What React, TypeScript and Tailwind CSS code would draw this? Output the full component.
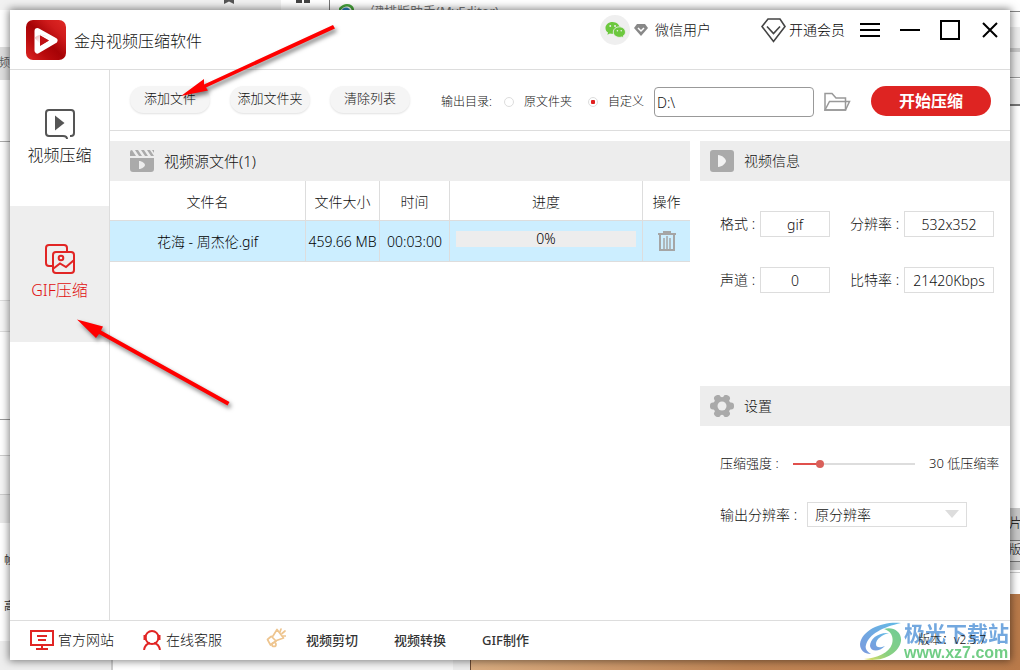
import { useState } from "react";
import type { ReactNode } from "react";

const SIDE_ICON = "h-[30px] w-[30px]";

function Logo() {
  return (
    <svg viewBox="0 0 40 40" className="h-10 w-10" aria-hidden="true">
      <defs>
        <linearGradient id="logoBg" x1="1" y1="0" x2="0" y2="1">
          <stop offset="0" stopColor="#e02a26" />
          <stop offset="0.25" stopColor="#cf1b1b" />
          <stop offset="0.5" stopColor="#a60306" />
          <stop offset="0.7" stopColor="#b80a0c" />
          <stop offset="1" stopColor="#de2624" />
        </linearGradient>
        <linearGradient id="logoFade" x1="0" y1="0" x2="1" y2="0.7">
          <stop offset="0" stopColor="#d99" stopOpacity="0.9" />
          <stop offset="1" stopColor="#fff" stopOpacity="0" />
        </linearGradient>
      </defs>
      <rect width="40" height="40" rx="7" fill="url(#logoBg)" />
      <path d="M11.500 11 28.500 20.500 11.500 30.500z" fill="none" stroke="#fff" strokeWidth="6" strokeLinejoin="round" />
      <path d="M8.500 18c4-4 10-4.500 14.500 0l-9-3.500v9z" fill="url(#logoFade)" />
      <path d="M14 15.200 23 20.500 14 26z" fill="#c01014" />
    </svg>
  );
}

function WechatIcon() {
  return (
    <svg viewBox="0 0 22 18" className="h-[18px] w-[21px]" aria-hidden="true">
      <path
        d="M8 .5C3.600.5.500 3.300.500 6.800c0 2 1 3.700 2.700 4.900L2.500 14l2.700-1.400c1 .3 2 .4 3 .4C12 13 15.500 10.200 15.500 6.800S12 .5 8 .5z"
        fill="#6cc83e"
      />
      <path
        d="M15 5.700c-3.600 0-6.300 2.400-6.300 5.500s2.700 5.500 6.300 5.500c.8 0 1.600-.1 2.300-.4l2.200 1.200-.6-2c1.600-1 2.500-2.500 2.500-4.300 0-3.100-2.800-5.500-6.400-5.500z"
        fill="#6cc83e"
        stroke="#efefef"
        strokeWidth="0.900"
      />
      <circle cx="5.500" cy="4.800" r="1" fill="#efefef" />
      <circle cx="10.500" cy="4.800" r="1" fill="#efefef" />
      <circle cx="13" cy="9.700" r="0.800" fill="#efefef" />
      <circle cx="17" cy="9.700" r="0.800" fill="#efefef" />
    </svg>
  );
}

function SidebarItem({ label, active, children }: { label: string; active?: boolean; children: ReactNode }) {
  return (
    <button
      type="button"
      className={
        active
          ? "flex h-[136px] flex-col items-center justify-center gap-1 bg-[#eeeeee] pb-0.5 text-[#e01010]"
          : "flex h-[136px] flex-col items-center justify-center gap-1 text-[#111111]"
      }
    >
      {children}
      <span className="text-base leading-6">{label}</span>
    </button>
  );
}

function PillButton({ children }: { children: ReactNode }) {
  return (
    <button
      type="button"
      className="h-[27px] w-20 rounded-full bg-[#f5f5f5] text-[13px] text-[#111111] shadow-[0_1px_2px_rgba(0,0,0,0.12)]"
    >
      {children}
    </button>
  );
}

function PathRadio({ label, checked, onChange }: { label: string; checked: boolean; onChange: () => void }) {
  return (
    <label className="flex items-center gap-2.5 text-xs">
      <input
        type="radio"
        name="output"
        checked={checked}
        onChange={onChange}
        className="h-2.5 w-2.5 appearance-none rounded-full border border-[#dddddd] bg-white checked:bg-[radial-gradient(circle,#e12020_2px,#fff_2.500px)]"
      />
      {label}
    </label>
  );
}

function SectionTitle({ icon, children }: { icon: ReactNode; children: ReactNode }) {
  return (
    <div className="flex h-10 items-center gap-2.5 bg-[#ededed] px-2.5">
      {icon}
      <h2 className="text-sm">{children}</h2>
    </div>
  );
}

function InfoField({ id, label, value, wide }: { id: string; label: string; value: string; wide?: boolean }) {
  return (
    <div className="flex items-center justify-between">
      <label htmlFor={id} className="whitespace-nowrap text-sm">
        {label} :
      </label>
      <input
        id={id}
        readOnly
        value={value}
        className={
          wide
            ? "h-[26px] w-[90px] border border-[#dddddd] text-center text-sm outline-none"
            : "h-[26px] w-[70px] border border-[#dddddd] text-center text-sm outline-none"
        }
      />
    </div>
  );
}

function Desktop() {
  return (
    <div className="absolute inset-0 overflow-hidden bg-white text-[#333333]" aria-hidden="true">
      <div className="absolute left-0 top-0 h-2.5 w-[281px] bg-[#f1f1f1]" />
      <svg className="absolute left-[224px] top-0 h-1 w-[10px]" viewBox="0 0 10 4">
        <path d="M0 0h10v4L5 1.500 0 4z" fill="#555" />
      </svg>
      <svg className="absolute left-[296px] top-0 h-[3px] w-[15px]" viewBox="0 0 15 3">
        <path d="M0 0h6v3H0zM8 0h6v3H8z" fill="#444" />
      </svg>
      <div className="absolute left-[329px] top-0 h-3 w-px bg-[#777777]" />
      <svg className="absolute left-[339px] top-[3px] h-[15px] w-[15px]" viewBox="0 0 15 15">
        <circle cx="7" cy="9" r="4.500" fill="#2c82bd" />
        <path d="M0 7Q5 1 10 2.500 14 4 14 8" fill="none" stroke="#46a33a" strokeWidth="2.500" />
      </svg>
      <span className="absolute left-[358px] top-[3px] whitespace-nowrap text-[13px] font-normal leading-4 text-[#777777]">
        一键排版助手(MyEditor)
      </span>

      <div className="absolute left-0 top-[47px] h-[33px] w-2.5 bg-[#dedede]" />
      <span className="absolute left-[-2px] top-[55px] whitespace-nowrap text-xs leading-4">频夕</span>
      <div className="absolute left-0 top-[141px] h-px w-2.5 bg-[#aaaaaa]" />
      <div className="absolute left-0 top-[300px] h-8 w-2.5 border-t border-b border-[#dddddd] bg-[#f7f7f7]" />
      <div className="absolute left-0 top-[419px] h-px w-2.5 bg-[#999999]" />
      <div className="absolute left-0 top-[455px] h-10 w-2.5 border-t border-b border-[#cccccc] bg-[#f5f5f5]" />
      <div className="absolute left-0 top-[495px] h-7 w-2.5 bg-[#e9e9e9]" />
      <span className="absolute left-1 top-[552px] text-[11px] font-normal leading-4">帧</span>
      <span className="absolute left-1 top-[598px] text-[11px] font-normal leading-4">高</span>
      <div className="absolute left-0 top-[641px] h-[30px] w-[113px] border-r-2 border-[#cccccc] bg-[#eeeeee]" />
      <div className="absolute bottom-0 left-[160px] h-2.5 w-[293px] bg-[#f5f5f5]" />
      <div className="absolute bottom-0 left-[453px] h-2.5 w-[17px] bg-[#ebebeb]" />
      <div className="absolute bottom-0 left-[470px] right-0 h-[76px] border-l border-[#6b4a33] bg-linear-to-r from-[#d9ac80] via-[#c08555] to-[#b97a4a]" />

      <div className="absolute right-0 top-[11px] h-px w-2.5 bg-[#888888]" />
      <div className="absolute right-0 top-[27px] h-[51px] w-2.5 border-b border-[#999999] bg-[#ededed]" />
      <div className="absolute right-0 top-[48px] h-1 w-2.5 bg-[#c8c8c8]" />
      <div className="absolute right-0 top-[79px] h-[27px] w-2.5 border-b-2 border-[#777777] bg-[#eeeeee]" />
      <div className="absolute right-0 top-[508px] h-[62px] w-2.5 bg-[#c9c9c9]" />
      <span className="absolute left-[1009px] top-[514px] text-[13px] leading-4 text-black">片</span>
      <div className="absolute right-0 top-[540px] h-[22px] w-2.5 border-y border-[#777777] bg-[#dddddd]" />
      <span className="absolute left-[1009px] top-[542px] text-xs leading-4 text-black">版</span>
      <div className="absolute right-0 top-[572px] h-px w-2.5 bg-[#cccccc]" />
    </div>
  );
}

function Arrows() {
  return (
    <svg
      className="pointer-events-none absolute left-0 top-0 h-[430px] w-[360px] drop-shadow-[2px_3px_2px_rgba(0,0,0,0.5)]"
      viewBox="0 0 360 430"
      aria-hidden="true"
    >
      <g fill="#ff0000">
        <path d="M181 96 204 79 204 84.500 333 25 335 28.500 206 87.500 208 90.500z" />
        <path d="M77 319.500 103 326.500 101 330.500 229.500 402 227.500 405.500 99 334 96 338z" />
      </g>
    </svg>
  );
}

function Watermark() {
  return (
    <div className="pointer-events-none absolute bottom-2 right-[11px] flex items-end gap-0.5 opacity-90" aria-hidden="true">
      <svg viewBox="0 0 42 40" className="h-10 w-[42px]">
        <defs>
          <linearGradient id="wmBlue" x1="1" y1="0" x2="0" y2="1">
            <stop offset="0" stopColor="#53b4e4" />
            <stop offset="1" stopColor="#6d8fda" />
          </linearGradient>
          <linearGradient id="wmGreen" x1="1" y1="0" x2="0" y2="1">
            <stop offset="0" stopColor="#62c68e" />
            <stop offset="0.600" stopColor="#7dcc74" />
            <stop offset="1" stopColor="#e6dc55" />
          </linearGradient>
        </defs>
        <path d="M41 1C24-1 2 7 0 22c0 6 4 10 11 10-5-3-6-6-5-9C9 12 23 5 41 1z" fill="url(#wmBlue)" />
        <path d="M29 11C18 10 10 17 10 24c1 6 9 6 15 0-5 2-9 2-9-2 0-5 6-9 13-11z" fill="url(#wmBlue)" />
        <path d="M24 7c9-3 18 3 17 12-2 13-20 22-37 18 13-1 25-6 28-15 2-7-1-13-8-15z" fill="url(#wmGreen)" />
      </svg>
      <div className="flex flex-col whitespace-nowrap font-bold">
        <span className="text-[21px] leading-[22px] text-[#649fdc]">极光下载站</span>
        <span className="font-['Liberation_Sans',sans-serif] text-base leading-[18px] text-[#62c878]">www.xz7.com</span>
      </div>
    </div>
  );
}

export default function App() {
  const [target, setTarget] = useState("custom");
  const [strength, setStrength] = useState(30);
  const [path, setPath] = useState("D:\\");
  const filled = ((strength - 20) / 50) * 100;

  return (
    <div className="relative flex min-h-screen p-2.5 font-['Noto_Sans','Noto_Sans_CJK_SC',sans-serif] font-light text-[#111111]">
      <Desktop />
      <main className="relative flex min-w-0 flex-1 flex-col bg-white shadow-[0_0_8px_1px_rgba(0,0,0,0.5)]">
        <header className="flex h-[60px] items-start border-b border-[#dddddd] pl-4 pr-2.5">
          <div className="flex flex-1 items-center gap-2 pt-2.5">
            <Logo />
            <h1 className="pt-0.5 text-base">金舟视频压缩软件</h1>
          </div>
          <div className="flex h-10 items-center">
            <button type="button" className="mr-[50px] flex items-center text-sm">
              <span className="mr-1 flex h-[30px] w-[30px] items-center justify-center rounded-full bg-[#efefef]">
                <WechatIcon />
              </span>
              <svg viewBox="0 0 14 12" className="mr-[7px] h-3 w-3.5" aria-hidden="true">
                <path d="M3 0h8l3 4-7 8-7-8z" fill="#888" />
                <path d="M4 4l3 3 3-3" fill="none" stroke="#fff" strokeWidth="1.500" />
              </svg>
              微信用户
            </button>
            <button type="button" className="mr-[15px] flex items-center gap-[3px] text-sm text-black">
              <svg viewBox="0 0 25 25" className="h-[25px] w-[25px]" fill="none" stroke="#444" strokeWidth="1.600" aria-hidden="true">
                <path d="M7 1h12l5 7.500L12.500 23.500 1 8.500z" />
                <path d="M6 8.500l6.500 7 6.500-7" />
              </svg>
              开通会员
            </button>
            <div className="flex gap-5">
              <button type="button" aria-label="菜单">
                <svg viewBox="0 0 20 20" className="h-5 w-5">
                  <path d="M0 4h20M0 10h20M0 16h20" stroke="#000" strokeWidth="2" />
                </svg>
              </button>
              <button type="button" aria-label="最小化">
                <svg viewBox="0 0 20 20" className="h-5 w-5">
                  <path d="M0 10h20" stroke="#000" strokeWidth="2" />
                </svg>
              </button>
              <button type="button" aria-label="最大化">
                <svg viewBox="0 0 20 20" className="h-5 w-5">
                  <path d="M1 1h18v18H1z" fill="none" stroke="#000" strokeWidth="2" />
                </svg>
              </button>
              <button type="button" aria-label="关闭">
                <svg viewBox="0 0 20 20" className="h-5 w-5">
                  <path d="M3 3l14 14M17 3 3 17" stroke="#000" strokeWidth="2" />
                </svg>
              </button>
            </div>
          </div>
        </header>

        <div className="flex flex-1">
          <nav className="flex w-[100px] shrink-0 flex-col border-r border-[#dddddd]">
            <SidebarItem label="视频压缩">
              <svg viewBox="0 0 30 30" className={SIDE_ICON} fill="none" stroke="#555" strokeWidth="2" aria-hidden="true">
                <path d="M25 27h1a3 3 0 0 0 3-3V4a3 3 0 0 0-3-3H4a3 3 0 0 0-3 3v20a3 3 0 0 0 3 3h14q4 0 4 3" />
                <path d="M10 6.500v15L19.500 14z" fill="#555" stroke="none" />
              </svg>
            </SidebarItem>
            <SidebarItem label="GIF压缩" active>
              <svg viewBox="0 0 30 30" className={SIDE_ICON} fill="none" stroke="#e12524" strokeWidth="2" aria-hidden="true">
                <path d="M7 22H4a3 3 0 0 1-3-3V4a3 3 0 0 1 3-3h15a3 3 0 0 1 3 3v3" />
                <rect x="8" y="8" width="21" height="21" rx="3" />
                <circle cx="16" cy="14" r="2.300" />
                <path d="M8.500 24.500l6.500-5 6 3.500 7.500-6.500" />
              </svg>
            </SidebarItem>
          </nav>

          <div className="flex min-w-0 flex-1 flex-col">
            <div className="flex h-[61px] items-center border-b border-[#dddddd] pl-5 pr-[19px]">
              <div className="mr-[31px] flex gap-5 pb-0.5">
                <PillButton>添加文件</PillButton>
                <PillButton>添加文件夹</PillButton>
                <PillButton>清除列表</PillButton>
              </div>
              <div className="flex items-center pt-1">
                <span className="mr-3 text-xs">输出目录:</span>
                <div className="mr-2.5 flex gap-4">
                  <PathRadio label="原文件夹" checked={target === "source"} onChange={() => setTarget("source")} />
                  <PathRadio label="自定义" checked={target === "custom"} onChange={() => setTarget("custom")} />
                </div>
              </div>
              <div className="flex items-center gap-2.5 pt-1">
                <input
                  aria-label="输出路径"
                  value={path}
                  onChange={(e) => setPath(e.target.value)}
                  className="h-[30px] w-40 rounded border border-[#999999] px-0.5 text-sm outline-none"
                />
                <button type="button" aria-label="打开文件夹">
                  <svg viewBox="0 0 27 20" className="h-5 w-[27px]" fill="none" stroke="#999" strokeWidth="1.500">
                    <path d="M1 18V1.500h7l4 4.500h9.500v12z" />
                    <path d="M1 18 5.500 9.500H25.500L21.500 18z" />
                  </svg>
                </button>
              </div>
              <button
                type="button"
                className="ml-auto mt-0.5 h-[30px] w-[120px] rounded-full bg-[#de2422] text-base font-bold text-white"
              >
                开始压缩
              </button>
            </div>

            <div className="flex flex-1 gap-2.5 pt-2.5">
              <section className="min-w-0 flex-1">
                <div className="flex h-10 items-center gap-2.5 bg-[#ededed] px-5">
                  <svg viewBox="0 0 24 22" className="h-[22px] w-6" fill="#aaa" aria-hidden="true">
                    <path d="M0 8h24v11a3 3 0 0 1-3 3H3a3 3 0 0 1-3-3zM0 6V2q0-2 2-2l4 6zM5 0h3l4 6H9zM11 0h3l4 6h-3zM17 0h3l4 6h-3zM22 0h2v3z" />
                    <path d="M9 11v8c3 0 6-2.500 6-4s-3-4-6-4z" fill="#ededed" />
                  </svg>
                  <h2 className="text-[15px]">视频源文件(1)</h2>
                </div>
                <table className="w-full table-fixed border-separate border-spacing-0 text-center text-sm">
                  <colgroup>
                    <col />
                    <col className="w-[74px]" />
                    <col className="w-[70px]" />
                    <col className="w-[193px]" />
                    <col className="w-[47px]" />
                  </colgroup>
                  <thead>
                    <tr className="h-10">
                      <th className="border-b border-r border-[#dddddd] p-0 pt-0.5 font-light">文件名</th>
                      <th className="border-b border-r border-[#dddddd] p-0 pt-0.5 font-light">文件大小</th>
                      <th className="border-b border-r border-[#dddddd] p-0 pt-0.5 font-light">时间</th>
                      <th className="border-b border-r border-[#dddddd] p-0 pt-0.5 font-light">进度</th>
                      <th className="border-b border-[#dddddd] p-0 pt-0.5 font-light">操作</th>
                    </tr>
                  </thead>
                  <tbody>
                    <tr className="h-[41px] bg-[#cceeff] text-black">
                      <td className="border-b border-r border-[#dddddd] p-0 pt-0.5">花海 - 周杰伦.gif</td>
                      <td className="whitespace-nowrap border-b border-r border-[#dddddd] p-0 pt-0.5">459.66 MB</td>
                      <td className="border-b border-r border-[#dddddd] p-0 pt-0.5">00:03:00</td>
                      <td className="border-b border-r border-[#dddddd] px-1.5 pb-1 pt-0">
                        <div role="progressbar" aria-valuenow={0} className="h-4 bg-[#ededed] text-sm leading-4">
                          0%
                        </div>
                      </td>
                      <td className="border-b border-[#dddddd] p-0">
                        <button type="button" aria-label="删除" className="block w-full">
                          <svg viewBox="0 0 18 20" className="mx-auto h-5 w-[18px]" fill="none" stroke="#a5a5a5" strokeWidth="2">
                            <path d="M0 3h18M5 1h8M2 4v15h14V4" />
                            <path d="M6 7v11M9 5v13M12 7v11" strokeWidth="1.500" />
                          </svg>
                        </button>
                      </td>
                    </tr>
                  </tbody>
                </table>
              </section>

              <aside className="w-[310px] shrink-0">
                <section className="h-[245px]">
                  <SectionTitle
                    icon={
                      <svg viewBox="0 0 24 22" className="h-[22px] w-6" aria-hidden="true">
                        <rect width="24" height="22" rx="3" fill="#aaa" />
                        <path d="M8 5v12c4 0 8-4 8-6s-4-6-8-6z" fill="#f2f2f2" />
                      </svg>
                    }
                  >
                    视频信息
                  </SectionTitle>
                  <div className="grid grid-cols-[110px_144px] gap-x-5 gap-y-[30px] pl-5 pt-[30px]">
                    <InfoField id="format" label="格式" value="gif" />
                    <InfoField id="size" label="分辨率" value="532x352" wide />
                    <InfoField id="channel" label="声道" value="0" />
                    <InfoField id="bitrate" label="比特率" value="21420Kbps" wide />
                  </div>
                </section>
                <section>
                  <SectionTitle
                    icon={
                      <svg viewBox="0 0 24 22" className="h-[22px] w-6" aria-hidden="true">
                        <g fill="#aaa">
                          <circle cx="12" cy="11" r="9" />
                          <rect x="0" y="7.500" width="24" height="7" rx="3" />
                          <rect x="0" y="7.500" width="24" height="7" rx="3" transform="rotate(60 12 11)" />
                          <rect x="0" y="7.500" width="24" height="7" rx="3" transform="rotate(120 12 11)" />
                        </g>
                        <circle cx="12" cy="11" r="4.500" fill="#ededed" />
                      </svg>
                    }
                  >
                    设置
                  </SectionTitle>
                  <div className="mt-7 flex h-5 items-center pl-5 text-[13px]">
                    <label htmlFor="strength" className="w-[73px]">
                      压缩强度 :
                    </label>
                    <input
                      id="strength"
                      type="range"
                      min={20}
                      max={70}
                      value={strength}
                      onChange={(e) => setStrength(Number(e.target.value))}
                      className="h-2 w-[122px] appearance-none bg-size-[100%_2px] bg-center bg-no-repeat [&::-webkit-slider-thumb]:h-2 [&::-webkit-slider-thumb]:w-2 [&::-webkit-slider-thumb]:appearance-none [&::-webkit-slider-thumb]:rounded-full [&::-webkit-slider-thumb]:bg-[#d9605a]"
                      style={{ backgroundImage: `linear-gradient(to right, #e0504c ${filled}%, #dddddd ${filled}%)` }}
                    />
                    <span className="ml-3.5 whitespace-nowrap">{strength} 低压缩率</span>
                  </div>
                  <div className="mt-7 flex items-center pl-5 text-sm">
                    <label htmlFor="resolution" className="w-[87px]">
                      输出分辨率 :
                    </label>
                    <div className="relative">
                      <select
                        id="resolution"
                        className="h-[25px] w-40 appearance-none border border-[#dddddd] bg-white px-[7px] text-sm leading-5 outline-none"
                      >
                        <option>原分辨率</option>
                      </select>
                      <svg viewBox="0 0 14 8" className="pointer-events-none absolute right-2 top-2 h-2 w-3.5" aria-hidden="true">
                        <path d="M0 0h14L7 8z" fill="#ddd" />
                      </svg>
                    </div>
                  </div>
                </section>
              </aside>
            </div>
          </div>
        </div>

        <footer className="flex h-10 items-center border-t border-[#dddddd] pb-px pl-5 pr-6 text-sm">
          <a href="#site" className="mr-[29px] flex items-center gap-1">
            <svg viewBox="0 0 24 20" className="h-5 w-6" fill="none" stroke="#e12524" strokeWidth="2" aria-hidden="true">
              <path d="M1 1h22v14H1zM6 19h12M12 15v4M7 6h10M8 10h8" />
            </svg>
            官方网站
          </a>
          <a href="#service" className="mr-11 flex items-center gap-[5px]">
            <svg viewBox="0 0 18 20" className="h-5 w-[18px]" fill="none" stroke="#e12524" strokeWidth="2" aria-hidden="true">
              <circle cx="9" cy="7.500" r="6.500" />
              <path d="M2 5v5M16 5v5" strokeWidth="3" />
              <path d="M1 20q1-6 6-7M17 20q-1-6-6-7" />
            </svg>
            在线客服
          </a>
          <svg
            viewBox="0 0 20 20"
            className="mb-1 mr-5 h-5 w-5"
            fill="none"
            stroke="#eec58f"
            strokeWidth="1.700"
            strokeLinejoin="round"
            strokeLinecap="round"
            aria-hidden="true"
          >
            <path d="M1.500 11.500 5 8.500l2-.500L11 1.500 17.500 10l-7 2.500L4.500 17z" />
            <path d="M6 9l4 4" />
            <circle cx="8" cy="16.500" r="2" />
            <path d="M14 4l1-3M16 5.500 19 3M17 8h2.500" />
          </svg>
          <div className="flex flex-1 gap-9 text-[13px] font-medium text-[#333333]">
            <a href="#cut">视频剪切</a>
            <a href="#convert">视频转换</a>
            <a href="#gif">GIF制作</a>
          </div>
          <span className="relative z-10 text-xs">版本：v2.5.7</span>
        </footer>
      </main>
      <Watermark />
      <Arrows />
    </div>
  );
}
